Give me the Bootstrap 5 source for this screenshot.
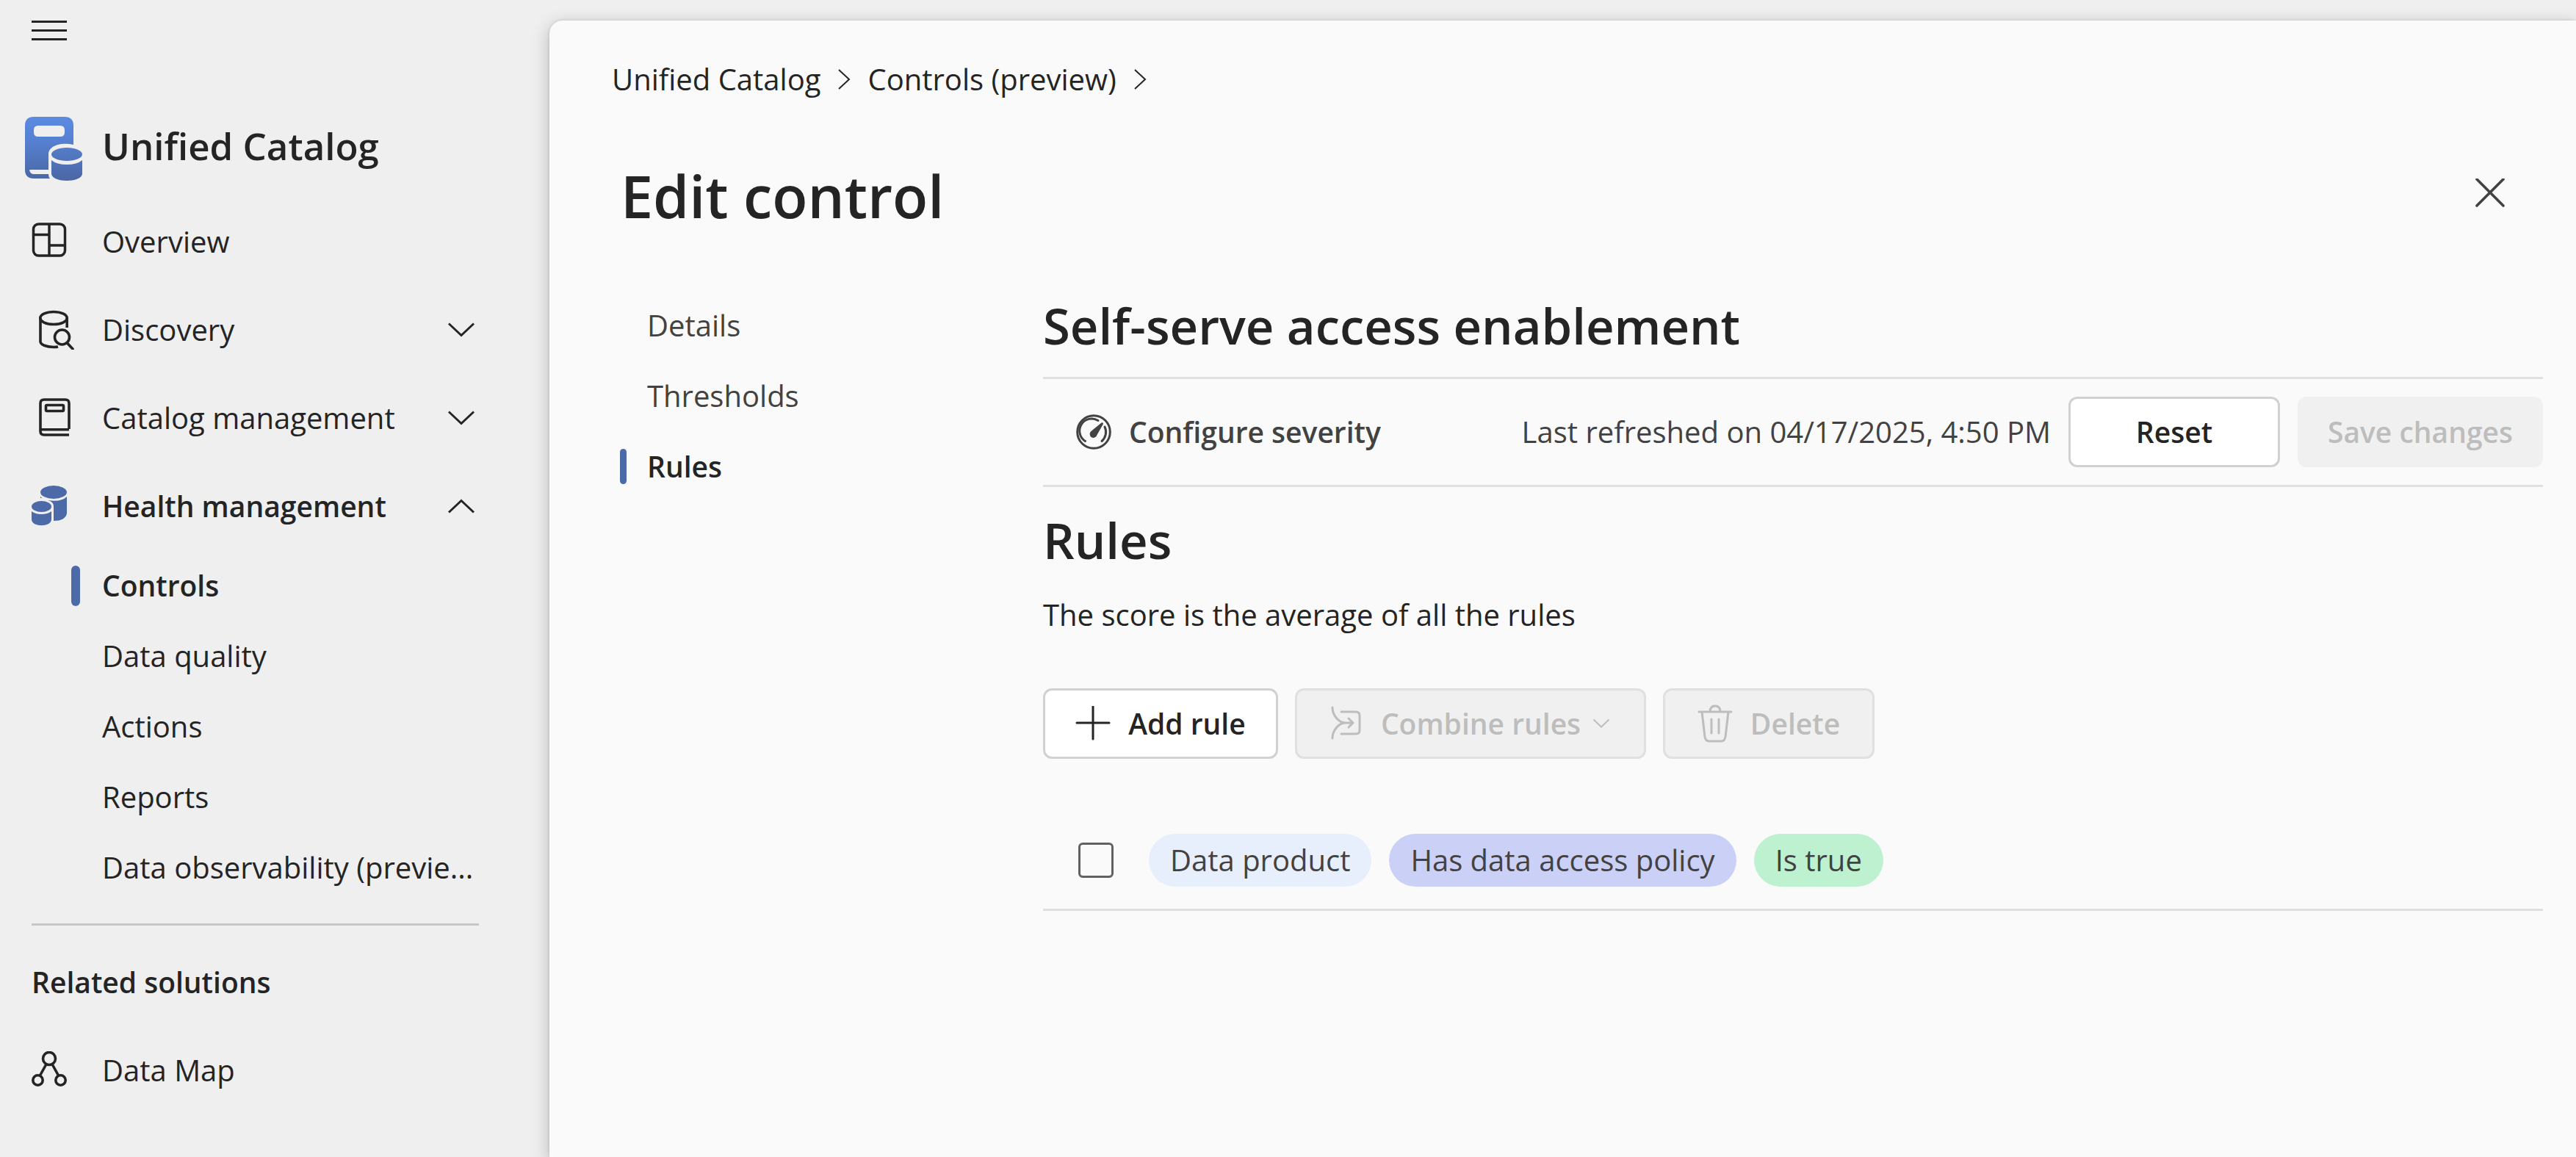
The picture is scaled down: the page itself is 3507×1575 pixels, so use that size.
<!DOCTYPE html>
<html lang="en">
<head>
<meta charset="utf-8">
<meta name="viewport" content="width=device-width, initial-scale=1">
<title>Unified Catalog - Edit control</title>
<link href="https://cdn.jsdelivr.net/npm/bootstrap@5.3.0/dist/css/bootstrap.min.css" rel="stylesheet">
<style>
  body { font-family: "Open Sans", "Noto Sans", sans-serif; font-size: 40px; line-height: 60px; color: #242424; background: #efefef; }
  a { color: inherit; text-decoration: none; }
  svg { display: block; flex: none; fill: none; stroke: currentColor; }
  h1, h2, h3, p, ul { margin: 0; }
  .semi { font-weight: 600; font-size: 39px; }

  .side-pane { width: 748px; flex: none; padding: 0 96px 0 43px; }
  .menu-btn { height: 83px; padding: 0; border: 0; background: none; color: inherit; }
  .brand-row { height: 142px; margin-top: 44px; }
  .brand-name { font-size: 51px; line-height: 72px; }
  .brand-logo { margin-left: -9px; }
  .side-icon { width: 96px; flex: none; }
  .side-row { height: 120px; border: 0; padding: 0; background: none; color: inherit; width: 100%; text-align: left; }
  .side-row .chev { margin-right: 6px; }
  .sub-row { height: 96px; }
  .sub-mark { width: 96px; flex: none; padding-left: 54px; }
  .sub-mark::before { content: ""; display: block; width: 12px; height: 55px; border-radius: 6px; }
  .sub-row.active .sub-mark::before { background: #4c6aa8; }
  .side-rule { height: 3px; background: #c7c7c7; margin: 28px 0 17px; }

  .main-pane { min-width: 0; margin-top: 28px; padding: 50px 45px 0 85px; background: #fafafa; border-top-left-radius: 18px; box-shadow: 0 6px 24px rgba(0,0,0,.24), 0 0 4px rgba(0,0,0,.12); }
  .crumbs { gap: 23px; }
  .title-row { margin-top: 75px; padding-left: 12px; padding-right: 36px; }
  .page-title { font-size: 79px; line-height: 108px; }
  .close-btn { padding: 12px; border: 0; background: none; color: #424242; }
  .body-row { padding-top: 74px; }
  .tab-col { width: 587px; flex: none; padding-left: 11px; color: #424242; }
  .tab-link { height: 96px; gap: 28px; }
  .tab-link::before { content: ""; width: 9px; height: 48px; border-radius: 5px; }
  .tab-link.active { color: #242424; }
  .tab-link.active::before { background: #4c6aa8; }
  .section-title { font-size: 67px; line-height: 96px; }
  .tool-strip { margin-top: 22px; height: 150px; border-top: 3px solid #e0e0e0; border-bottom: 3px solid #e0e0e0; color: #424242; gap: 24px; }
  .severity-btn { border: 0; background: none; padding: 0 0 0 45px; color: inherit; gap: 24px; }
  .act { height: 96px; border: 3px solid #d1d1d1; border-radius: 12px; background: #fff; color: #242424; font-size: 39px; font-weight: 600; line-height: 60px; padding: 0 36px; gap: 24px; white-space: nowrap; }
  .act:hover { background: #f5f5f5; }
  .act:disabled { background: #f0f0f0; border-color: #e0e0e0; color: #bdbdbd; opacity: 1; }
  .act.flat:disabled { border-color: #f0f0f0; }
  .act.reset { width: 288px; }
  .act.save { width: 334px; }
  .act.add { width: 320px; }
  .act.combine { width: 478px; }
  .act.remove { width: 288px; }
  .cmd-row { margin-top: 70px; gap: 23px; }
  .rule-row { margin-top: 72px; height: 135px; padding-left: 48px; border-bottom: 3px solid #e0e0e0; gap: 24px; color: #424242; }
  .rule-check { appearance: none; width: 48px; height: 48px; border: 3px solid #616161; border-radius: 6px; margin: 0 24px 0 0; background: #fafafa; }
  .rule-check:checked { background: #4c6aa8; }
  .pill { height: 72px; border-radius: 36px; padding: 6px 29px; white-space: nowrap; }
  .pill-blue { background: #e8effc; }
  .pill-violet { background: #cbd0f7; }
  .pill-green { background: #bdf1d0; }
</style>
<script src="https://cdn.jsdelivr.net/npm/bootstrap@5.3.0/dist/js/bootstrap.bundle.min.js"></script>
</head>
<body>
<div class="d-flex min-vh-100">
  <nav class="side-pane" aria-label="Unified Catalog">
    <button class="menu-btn d-flex align-items-center" type="button" aria-label="Toggle navigation">
      <svg width="48" height="28" viewBox="0 0 48 28" stroke-width="3"><path d="M0 1.500h48M0 13.500h48M0 25.500h48"/></svg>
    </button>
    <div class="brand-row d-flex align-items-center">
      <div class="side-icon">
        <svg class="brand-logo" width="80" height="98" viewBox="0 -10 80 98" stroke="none">
          <defs><linearGradient id="lg" gradientUnits="userSpaceOnUse" x1="0" y1="0" x2="0" y2="88"><stop offset="0" stop-color="#5b8ae0"/><stop offset=".3" stop-color="#5783d6"/><stop offset="1" stop-color="#4a66a3"/></linearGradient></defs>
          <path fill="url(#lg)" fill-rule="evenodd" stroke="none" d="M12 0H54Q66 0 66 12V38C48 34 32 40 32 51V72H6Q7 78 12 78H32Q32 82 34 84H12Q0 84 0 72V12Q0 0 12 0ZM18 12Q12 12 12 18V21Q12 27 18 27H48Q54 27 54 21V18Q54 12 48 12Z"/>
          <ellipse cx="57" cy="51" rx="21" ry="9" fill="url(#lg)" stroke="none"/>
          <path fill="url(#lg)" stroke="none" d="M36 59Q43 65 57 65T78 59V78C76 90 38 90 36 78Z"/>
        </svg>
      </div>
      <div class="brand-name fw-semibold text-nowrap">Unified Catalog</div>
    </div>

    <a class="side-row d-flex align-items-center" href="#">
      <span class="side-icon"><svg width="48" height="54" viewBox="0 0 48 54" stroke-width="3.5"><rect x="2.500" y="3" width="43" height="43" rx="7"/><path d="M24 3v43M2 17.500h22M24 32h22"/></svg></span>
      <span>Overview</span>
    </a>
    <button class="side-row d-flex align-items-center" type="button">
      <span class="side-icon"><svg width="60" height="54" viewBox="0 0 60 54" stroke-width="3.600"><ellipse cx="30" cy="11" rx="18.200" ry="8.500"/><path d="M12 11v32c0 4 8 7.500 18 7.500 2 0 4 0 6-.5M48.200 11v13"/><circle cx="41.500" cy="37" r="10"/><path d="M48.500 45l7.500 8" stroke-linecap="round"/></svg></span>
      <span class="flex-grow-1">Discovery</span>
      <svg class="chev" width="36" height="20" viewBox="0 0 36 20" stroke-width="3"><path d="M1 1.500l17 16 17-16"/></svg>
    </button>
    <button class="side-row d-flex align-items-center" type="button">
      <span class="side-icon"><svg width="60" height="56" viewBox="0 0 60 56" stroke-width="3.600"><path d="M51 43V8q0-5-5-5H17q-5 0-5 5v38q0 5 5 5h34M12 43.800h39"/><rect x="19.500" y="10.500" width="24" height="8" rx="1.500"/></svg></span>
      <span class="flex-grow-1 text-nowrap">Catalog management</span>
      <svg class="chev" width="36" height="20" viewBox="0 0 36 20" stroke-width="3"><path d="M1 1.500l17 16 17-16"/></svg>
    </button>
    <button class="side-row semi d-flex align-items-center" type="button" aria-expanded="true">
      <span class="side-icon"><svg width="48" height="56" viewBox="0 0 48 56"><g fill="#4c6aa8" stroke="none"><ellipse cx="30" cy="9" rx="18" ry="9"/><path d="M12 14.500q1 1.500 2.500 2.500H12ZM48 15V38q-2 10-18 10V28q0-6-8-8 18 3 26-5Z"/><ellipse cx="13.500" cy="28.500" rx="13.500" ry="7.500"/><path d="M0 35q5 4 13.500 4T27 35V46c0 11-27 11-27 0Z"/></g></svg></span>
      <span class="flex-grow-1 text-nowrap">Health management</span>
      <svg class="chev" width="36" height="20" viewBox="0 0 36 20" stroke-width="3"><path d="M1 18.500l17-16 17 16"/></svg>
    </button>
    <ul class="list-unstyled">
      <li><a class="sub-row active semi d-flex align-items-center" href="#" aria-current="page"><span class="sub-mark"></span>Controls</a></li>
      <li><a class="sub-row d-flex align-items-center" href="#"><span class="sub-mark"></span>Data quality</a></li>
      <li><a class="sub-row d-flex align-items-center" href="#"><span class="sub-mark"></span>Actions</a></li>
      <li><a class="sub-row d-flex align-items-center" href="#"><span class="sub-mark"></span>Reports</a></li>
      <li><a class="sub-row d-flex align-items-center text-nowrap" href="#"><span class="sub-mark"></span>Data observability (previe...</a></li>
    </ul>
    <div class="side-rule"></div>
    <div class="side-row semi d-flex align-items-center">Related solutions</div>
    <a class="side-row d-flex align-items-center" href="#">
      <span class="side-icon"><svg width="48" height="52" viewBox="0 0 48 52" stroke-width="3.600"><circle cx="24" cy="10" r="8.500"/><circle cx="8.500" cy="39.500" r="6.700"/><circle cx="39.500" cy="39.500" r="6.700"/><path d="M19.500 18.500l-8 14.500M28.500 18.500l8 14.500"/></svg></span>
      <span>Data Map</span>
    </a>
  </nav>

  <main class="main-pane flex-grow-1">
    <nav class="crumbs d-flex align-items-center" aria-label="Breadcrumb">
      <a href="#">Unified Catalog</a>
      <svg width="18" height="28" viewBox="0 0 18 28" stroke-width="2"><path d="M2 1l14 13L2 27"/></svg>
      <a href="#">Controls (preview)</a>
      <svg width="18" height="28" viewBox="0 0 18 28" stroke-width="2"><path d="M2 1l14 13L2 27"/></svg>
    </nav>

    <div class="title-row d-flex align-items-center justify-content-between">
      <h1 class="page-title fw-semibold">Edit control</h1>
      <button class="close-btn" type="button" aria-label="Close"><svg width="48" height="48" viewBox="0 0 48 48" stroke-width="3.600" stroke-linecap="round"><path d="M6 1l36 36M42 1L6 37"/></svg></button>
    </div>

    <div class="body-row d-flex">
      <nav class="tab-col" aria-label="Edit control sections">
        <a class="tab-link d-flex align-items-center" href="#">Details</a>
        <a class="tab-link d-flex align-items-center" href="#">Thresholds</a>
        <a class="tab-link active semi d-flex align-items-center" href="#">Rules</a>
      </nav>

      <section class="flex-grow-1">
        <h2 class="section-title fw-semibold">Self-serve access enablement</h2>
        <div class="tool-strip d-flex align-items-center">
          <button class="severity-btn semi d-flex align-items-center" type="button">
            <svg width="48" height="48" viewBox="0 0 48 48" stroke-width="3"><circle cx="24" cy="24" r="22.300"/><path d="M12.500 36.500A16.500 16.500 0 0 1 30 8.500M39 17a16.500 16.500 0 0 1-4 19.500" stroke-linecap="round"/><path d="M34.500 11.500Q37 10.500 37 13L28.500 28A5 5 0 1 1 20.500 23Z" fill="currentColor" stroke="none"/></svg>
            Configure severity
          </button>
          <span class="ms-auto text-nowrap">Last refreshed on 04/17/2025, 4:50 PM</span>
          <button class="act reset" type="button">Reset</button>
          <button class="act flat save" type="button" disabled>Save changes</button>
        </div>

        <h2 class="section-title fw-semibold mt-4">Rules</h2>
        <p class="mt-4">The score is the average of all the rules</p>

        <div class="cmd-row d-flex">
          <button class="act add d-flex align-items-center justify-content-center" type="button">
            <svg width="48" height="48" viewBox="0 0 48 48" stroke-width="3" stroke-linecap="round"><path d="M24 1v44M2 23h44"/></svg>
            Add rule
          </button>
          <button class="act combine d-flex align-items-center justify-content-center" type="button" disabled>
            <svg width="44" height="48" viewBox="0 0 44 48" stroke-width="3" stroke-linecap="round" stroke-linejoin="round"><path d="M2 2C2 12 10 23 20 23H30M2 44C2 34 10 23 20 23M24 17l6 6-6 6M14 8h20q5 0 5 5v20q0 5-5 5H14"/></svg>
            <span class="d-flex align-items-center">Combine rules<svg class="ms-3" width="24" height="14" viewBox="0 0 24 14" stroke-width="2"><path d="M1.500 1.500l10.500 10 10.500-10"/></svg></span>
          </button>
          <button class="act remove d-flex align-items-center justify-content-center" type="button" disabled>
            <svg width="48" height="52" viewBox="0 0 48 52" stroke-width="3" stroke-linecap="round" stroke-linejoin="round"><path d="M2 10h44M17 10q0-8 7-8t7 8M6 10l4 34q1 6 6 6h16q5 0 6-6l4-34M19 20v19M29 20v19"/></svg>
            Delete
          </button>
        </div>

        <div class="rule-row d-flex align-items-center">
          <input class="rule-check" type="checkbox" aria-label="Select rule">
          <span class="pill pill-blue">Data product</span>
          <span class="pill pill-violet">Has data access policy</span>
          <span class="pill pill-green">Is true</span>
        </div>
      </section>
    </div>
  </main>
</div>
</body>
</html>
